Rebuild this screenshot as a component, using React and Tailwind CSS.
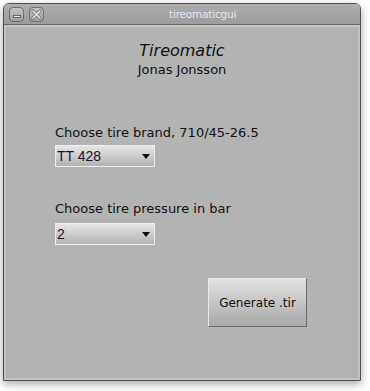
import React from "react";

function Select({ value }) {
  return (
    <div className="flex h-[22px] w-[100px] items-center justify-between border border-[#eeeeee] bg-gradient-to-b from-[#e6e6e6] to-[#b4b4b4] pl-[1px] pr-[4px]">
      <span className="text-[14px] leading-none text-[#20102e]" style={{ fontFamily: "'Liberation Sans', Arial, sans-serif" }}>
        {value}
      </span>
      <svg width="8" height="5" viewBox="0 0 8 5">
        <path d="M0 0H8L4 5Z" fill="#111" />
      </svg>
    </div>
  );
}

export default function App() {
  return (
    <div className="h-[391px] w-[370px] bg-white pl-[3px] pt-[3px]" style={{ fontFamily: "'DejaVu Sans', sans-serif" }}>
      <div className="flex h-[378px] w-[358px] flex-col overflow-hidden rounded-t-[6px] border border-[#505050] shadow-[0_3px_8px_rgba(0,0,0,0.35)]">
        {/* title bar */}
        <div className="relative flex h-[21px] shrink-0 items-center border-b border-[#6a6a6a] bg-gradient-to-b from-[#aeaeae] to-[#9c9c9c] pl-[5px]">
          <div className="flex gap-[5px]">
            <div className="flex h-[15px] w-[15px] items-end justify-center rounded-[4px] border border-[#6e6e6e] bg-gradient-to-b from-[#c4c4c4] to-[#a0a0a0] pb-[3px]">
              <div className="h-[3px] w-[8px] border border-[#666] bg-[#e8e8e8]" />
            </div>
            <div className="flex h-[15px] w-[15px] items-center justify-center rounded-[4px] border border-[#6e6e6e] bg-gradient-to-b from-[#c4c4c4] to-[#a0a0a0]">
              <svg width="11" height="11" viewBox="0 0 11 11">
                <path d="M2 2L9 9M9 2L2 9" stroke="#777" strokeWidth="3.2" strokeLinecap="round" />
                <path d="M2 2L9 9M9 2L2 9" stroke="#ececec" strokeWidth="1.6" strokeLinecap="round" />
              </svg>
            </div>
          </div>
          <span className="absolute left-[165px] top-[3px] text-[10.5px] tracking-[-0.2px] text-[#e2e6f2]">tireomaticgui</span>
        </div>
        {/* content */}
        <div className="flex flex-1 flex-col border-[2px] border-[#c2c2c2] bg-[#b3b3b3] text-[#111]">
          <div className="flex flex-col items-center pt-[14px]">
            <span className="text-[16px] italic leading-[20px]">Tireomatic</span>
            <span className="text-[13px] leading-[17px]">Jonas Jonsson</span>
          </div>
          <div className="flex flex-col pl-[49px] pt-[47px]">
            <span className="text-[13px] leading-[16px]">Choose tire brand, 710/45-26.5</span>
            <div className="mt-[4px]">
              <Select value="TT 428" />
            </div>
            <span className="mt-[34px] text-[13px] leading-[16px]">Choose tire pressure in bar</span>
            <div className="mt-[6px]">
              <Select value="2" />
            </div>
          </div>
          <div className="flex justify-end pr-[51px] pt-[33px]">
            <div className="flex h-[49px] w-[99px] items-center justify-center border border-b-[#6a6a6a] border-l-[#e8e8e8] border-r-[#6a6a6a] border-t-[#e8e8e8] bg-gradient-to-b from-[#e2e2e2] to-[#a9a9a9] text-[12px]">
              Generate .tir
            </div>
          </div>
        </div>
      </div>
    </div>
  );
}
